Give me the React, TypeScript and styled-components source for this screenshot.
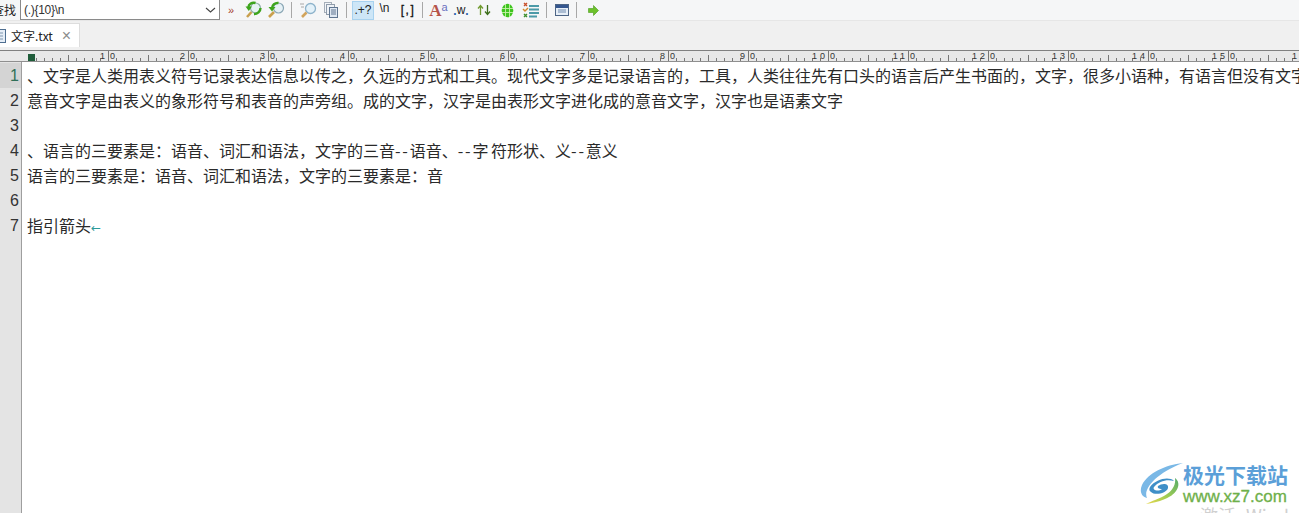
import React, { FC } from "react";
import styled, { createGlobalStyle } from "styled-components";

const lines = [
  "、文字是人类用表义符号记录表达信息以传之，久远的方式和工具。现代文字多是记录语言的，工具，人类往往先有口头的语言后产生书面的，文字，很多小语种，有语言但没有文字",
  "意音文字是由表义的象形符号和表音的声旁组。成的文字，汉字是由表形文字进化成的意音文字，汉字也是语素文字",
  "",
  "、语言的三要素是：语音、词汇和语法，文字的三音--语音、--字 符形状、义--意义",
  "语言的三要素是：语音、词汇和语法，文字的三要素是：音",
  "",
  "指引箭头",
];

const rulerMarks = Array.from({ length: 17 }, (_, i) => i);

const FindNextIcon: FC = () => (
  <svg width="18" height="18" viewBox="0 0 18 18">
    <circle cx="10.500" cy="7" r="5" fill="#e6f3f4" stroke="#8fb0a8" strokeWidth="1.200" />
    <path d="M6.500 11L2 16" stroke="#c9a04e" strokeWidth="2.600" />
    <path d="M3.500 6C3.500 3 7 1 10.500 2" stroke="#3da51d" strokeWidth="2.400" fill="none" />
    <path d="M0.500 5.500h6.500l-3.200 4.500z" fill="#3da51d" />
    <path d="M15.500 7c0 3.500-3 6-6.500 6" stroke="#3da51d" strokeWidth="2.400" fill="none" />
  </svg>
);

const FindPrevIcon: FC = () => (
  <svg width="18" height="18" viewBox="0 0 18 18">
    <circle cx="11.500" cy="7" r="5" fill="#e6f1f6" stroke="#8aa7b5" strokeWidth="1.200" />
    <path d="M7 11l-5 5" stroke="#c9a04e" strokeWidth="2.600" />
    <path d="M5 7c0-3 3-5.500 6.500-5" stroke="#3da51d" strokeWidth="2.400" fill="none" />
    <path d="M1.500 6h7l-3.500 4.500z" fill="#3da51d" />
  </svg>
);

const MagnifierIcon: FC = () => (
  <svg width="17" height="17" viewBox="0 0 17 17">
    <circle cx="10.500" cy="6.500" r="5" fill="#e3f1f9" stroke="#8db3cb" strokeWidth="1.300" />
    <path d="M6.500 10.500L2 15" stroke="#d2a45c" strokeWidth="2.600" />
    <path d="M0 2h4M1 5h3" stroke="#a8a8a8" />
  </svg>
);

const PagesIcon: FC = () => (
  <svg width="14" height="16" viewBox="0 0 14 16">
    <rect x="0.500" y="0.500" width="7" height="10" fill="#f2f5f9" stroke="#a5aeb9" />
    <rect x="2.500" y="2.500" width="8" height="10" fill="#eef2f7" stroke="#8f9cab" />
    <rect x="5.500" y="5.500" width="8" height="10" fill="#dfe8f3" stroke="#5f7590" />
    <path d="M7 8h5M7 10h5M7 12h5" stroke="#5f7590" />
  </svg>
);

const SwapIcon: FC = () => (
  <svg width="14" height="12" viewBox="0 0 14 12">
    <path d="M3.500 11V2M1 4.500L3.500 1.500 6 4.500" stroke="#6f9a2e" strokeWidth="1.300" fill="none" />
    <path d="M10.500 1v9M8 7.500l2.500 3 2.500-3" stroke="#3d6e1c" strokeWidth="1.300" fill="none" />
  </svg>
);

const GridIcon: FC = () => (
  <svg width="13" height="15" viewBox="0 0 13 15">
    <ellipse cx="6.500" cy="7.500" rx="5.800" ry="6.800" fill="#3fc41f" />
    <path d="M4.500 1v13M8.500 1v13M1 5.500h11M1 9.500h11" stroke="#c5f2a8" strokeWidth="0.900" />
  </svg>
);

const ListIcon: FC = () => (
  <svg width="17" height="17" viewBox="0 0 17 17">
    <path d="M7 4h10M7 7.500h10M7 11h10M7 14.500h8" stroke="#4b9aa8" strokeWidth="2" />
    <path d="M2 1l3 3M5 1L2 4" stroke="#c8502c" strokeWidth="1.400" />
    <path d="M1 7l2 2 3-3" stroke="#d08a2c" strokeWidth="1.400" fill="none" />
    <path d="M2 12l3 3M5 12l-3 3" stroke="#3e8f2e" strokeWidth="1.400" />
  </svg>
);

const PanelIcon: FC = () => (
  <svg width="14" height="12" viewBox="0 0 14 12">
    <rect x="0.500" y="0.500" width="13" height="11" fill="#e6eef7" stroke="#4c6485" />
    <rect x="1" y="1" width="12" height="3" fill="#34568f" />
    <path d="M3 6h8M3 8h8" stroke="#6f8aae" />
  </svg>
);

const GoIcon: FC = () => (
  <svg width="11" height="11" viewBox="0 0 11 11">
    <path d="M0.500 3.500h5V0.500L10.500 5.500l-5 5v-3h-5z" fill="#6cc12a" stroke="#4a9a1c" strokeWidth="0.600" />
  </svg>
);

const FileIcon: FC = () => (
  <svg width="12" height="16" viewBox="0 0 12 16">
    <rect x="0.500" y="1.500" width="11" height="13" fill="#e6eef7" stroke="#4f6f91" />
    <path d="M3 5h6M3 8h6M3 11h6" stroke="#7e96ae" />
  </svg>
);

const SwirlLogo: FC = () => (
  <svg width="43" height="41" viewBox="0 0 43 41">
    <defs>
      <linearGradient id="swirlTail" x1="0" y1="1" x2="1" y2="0">
        <stop offset="0" stopColor="#e8d84e" />
        <stop offset="0.500" stopColor="#9ccb54" />
        <stop offset="1" stopColor="#55ab6a" />
      </linearGradient>
    </defs>
    <path d="M43 0C25 2 8 10 2 22c-3 7 0 12 5 13C3 27 14 11 43 0z" fill="#7ab8e6" />
    <path d="M10 24c6-8 19-11 24-6-7-2-15 0-20 6-2 3 4 5 8 2-3 0-5-1-4-3 4-3 11-3 10 2-1 5-13 8-17 4-2-1-2-3-1-5z" fill="#3f8fc8" />
    <path d="M35 15c7 5 3 16-10 21-7 3-13 4-19 5 5-3 14-5 21-10 6-4 9-10 8-16z" fill="url(#swirlTail)" />
  </svg>
);

export default function App() {
  return (
    <>
      <GlobalStyle />
      <Window>
        <Toolbar>
          <FindLabel>查找</FindLabel>
          <FindCombo>
            <FindValue>(.){"{"}10{"}"}\n</FindValue>
            <svg width="11" height="6" viewBox="0 0 11 6">
              <path d="M1 1l4.500 4L10 1" stroke="#444" strokeWidth="1.100" fill="none" />
            </svg>
          </FindCombo>
          <MoreChevrons>»</MoreChevrons>
          <ToolButton $width={23}><FindNextIcon /></ToolButton>
          <ToolButton $width={21}><FindPrevIcon /></ToolButton>
          <Separator />
          <ToolButton $width={23}><MagnifierIcon /></ToolButton>
          <ToolButton $width={21}><PagesIcon /></ToolButton>
          <Separator />
          <ToolButton $width={22} $active><RegexText>.+?</RegexText></ToolButton>
          <ToolButton $width={21}><RegexText $raised>\n</RegexText></ToolButton>
          <ToolButton $width={22}><RegexBracket>[,]</RegexBracket></ToolButton>
          <Separator />
          <ToolButton $width={21}>
            <FontCaseBig>A</FontCaseBig>
            <FontCaseSmall>a</FontCaseSmall>
          </ToolButton>
          <ToolButton $width={24}>
            <WordDot>.</WordDot>
            <WordLetter>w</WordLetter>
            <WordDot>.</WordDot>
          </ToolButton>
          <ToolButton $width={22}><SwapIcon /></ToolButton>
          <ToolButton $width={25}><GridIcon /></ToolButton>
          <ToolButton $width={21}><ListIcon /></ToolButton>
          <Separator />
          <ToolButton $width={19}><PanelIcon /></ToolButton>
          <Separator />
          <ToolButton $width={22}><GoIcon /></ToolButton>
        </Toolbar>
        <TabBar>
          <Tab>
            <FileIcon />
            <TabTitle>文字.txt</TabTitle>
            <TabClose>×</TabClose>
          </Tab>
        </TabBar>
        <Ruler>
          <RulerMarker />
          <RulerTrack>
            {rulerMarks.map(i => (
              <RulerCell key={i}>
                {i > 0 && (
                  <>
                    <RulerTens>{i}</RulerTens>
                    <RulerBar />
                    <RulerUnit>0</RulerUnit>
                  </>
                )}
              </RulerCell>
            ))}
          </RulerTrack>
        </Ruler>
        <Editor>
          <Gutter>
            {lines.map((_, i) => (
              <GutterNumber key={i} $current={i === 0}>{i + 1}</GutterNumber>
            ))}
          </Gutter>
          <TextArea>
            {lines.map((line, i) => (
              <TextLine key={i}>
                {line.split(/(-+)/).map((part, j) =>
                  part.startsWith("-") ? <Dash key={j}>{part}</Dash> : part
                )}
                {i === 6 && <ReturnArrow>←</ReturnArrow>}
              </TextLine>
            ))}
          </TextArea>
        </Editor>
        <Watermark>
          <SwirlLogo />
          <WatermarkText>
            <WatermarkTitle>极光下载站</WatermarkTitle>
            <WatermarkUrl>www.xz7.com</WatermarkUrl>
          </WatermarkText>
        </Watermark>
        <ActivationHint>激活 Windows</ActivationHint>
      </Window>
    </>
  );
}

const GlobalStyle = createGlobalStyle`
  html, body {
    margin: 0;
    padding: 0;
    background: #ffffff;
    overflow: hidden;
  }
`;

const Window = styled.div`
  position: relative;
  width: 1299px;
  height: 513px;
  overflow: hidden;
  background: #ffffff;
  font-family: "Noto Sans CJK SC", "Liberation Sans", sans-serif;
  display: flex;
  flex-direction: column;
`;

const Toolbar = styled.div`
  height: 21px;
  flex: none;
  box-sizing: border-box;
  display: flex;
  align-items: center;
  margin-left: -8px;
  background: #f5f6f7;
  border-bottom: 1px solid #e6e6e6;
`;

const FindLabel = styled.span`
  font-size: 12px;
  line-height: 20px;
  width: 28px;
  color: #222222;
  flex: none;
`;

const FindCombo = styled.div`
  width: 200px;
  height: 20px;
  flex: none;
  box-sizing: border-box;
  background: #ffffff;
  border: 1px solid #8a8a8a;
  border-top: none;
  display: flex;
  align-items: center;
  justify-content: space-between;
  padding: 0 3px 0 3px;
`;

const FindValue = styled.span`
  font-family: "Liberation Sans", sans-serif;
  font-size: 12px;
  letter-spacing: -0.3px;
  color: #333333;
`;

const MoreChevrons = styled.span`
  width: 22px;
  flex: none;
  text-align: center;
  font-size: 11px;
  color: #a5402c;
  font-family: "Liberation Sans", sans-serif;
`;

const ToolButton = styled.div<{ $width: number; $active?: boolean }>`
  width: ${p => p.$width}px;
  height: 19px;
  flex: none;
  box-sizing: border-box;
  display: flex;
  align-items: center;
  justify-content: center;
  background: ${p => (p.$active ? "#cde6f7" : "transparent")};
  border: 1px solid ${p => (p.$active ? "#a8d2ef" : "transparent")};
`;

const RegexText = styled.span<{ $raised?: boolean }>`
  font-family: "Liberation Sans", sans-serif;
  font-size: 12px;
  line-height: 14px;
  color: #222222;
  margin-top: ${p => (p.$raised ? "-4px" : "0")};
`;

const RegexBracket = styled.span`
  font-family: "Liberation Sans", sans-serif;
  font-size: 12px;
  letter-spacing: 1.5px;
  line-height: 14px;
  color: #111111;
  -webkit-text-stroke: 0.3px #111111;
  margin-left: 4px;
`;

const FontCaseBig = styled.span`
  font-family: "Liberation Serif", serif;
  font-size: 17px;
  font-weight: 700;
  line-height: 16px;
  color: #b5544a;
  margin-top: 2px;
`;

const FontCaseSmall = styled.span`
  font-family: "Liberation Sans", sans-serif;
  font-size: 11px;
  line-height: 10px;
  color: #6a70c0;
  margin-top: -6px;
`;

const WordLetter = styled.span`
  font-family: "Liberation Sans", sans-serif;
  font-size: 12px;
  line-height: 12px;
  color: #222222;
`;

const WordDot = styled.span`
  font-family: "Liberation Sans", sans-serif;
  font-size: 12px;
  font-weight: 700;
  line-height: 12px;
  color: #2a5fa8;
  margin-top: 2px;
`;

const Separator = styled.div`
  width: 1px;
  height: 16px;
  flex: none;
  margin: 0 5px;
  background: #a8a8a8;
`;

const TabBar = styled.div`
  height: 29px;
  flex: none;
  box-sizing: border-box;
  display: flex;
  align-items: flex-end;
  padding-bottom: 3px;
  background: #f0f0f0;
`;

const Tab = styled.div`
  width: 88px;
  height: 24px;
  margin-left: -8px;
  box-sizing: border-box;
  display: flex;
  align-items: center;
  gap: 3px;
  padding-left: 1px;
  background: #ffffff;
  border: 1px solid #dddddd;
  border-bottom: none;
`;

const TabTitle = styled.span`
  font-size: 12px;
  color: #222222;
  margin-left: 2px;
`;

const TabClose = styled.span`
  font-family: "Liberation Sans", sans-serif;
  font-size: 16px;
  line-height: 16px;
  color: #8c8c8c;
  margin-left: 6px;
`;

const Ruler = styled.div`
  position: relative;
  height: 12px;
  flex: none;
  box-sizing: border-box;
  background: #e8e8e8;
  border-top: 1px solid #808080;
  border-bottom: 1px solid #8f8f8f;
  overflow: hidden;
`;

const RulerMarker = styled.div`
  position: absolute;
  left: 28px;
  top: 3px;
  width: 7px;
  height: 7px;
  background: #1f5c3a;
`;

const RulerTrack = styled.div`
  display: flex;
  height: 100%;
  padding-left: 28px;
  background-image:
    repeating-linear-gradient(to right, #777777 0, #777777 1px, transparent 1px, transparent 8px),
    repeating-linear-gradient(to right, transparent 0, transparent 40px, #777777 40px, #777777 41px, transparent 41px, transparent 80px);
  background-position: 28px bottom, 28px bottom;
  background-size: 100% 3px, 100% 6px;
  background-repeat: no-repeat;
`;

const RulerCell = styled.div`
  position: relative;
  width: 80px;
  flex: none;
  font-family: "Liberation Sans", sans-serif;
  font-size: 9px;
  line-height: 10px;
  color: #333333;
`;

const RulerTens = styled.span`
  position: absolute;
  right: 100%;
  top: 0;
  letter-spacing: 3px;
`;

const RulerBar = styled.i`
  position: absolute;
  left: 0;
  top: 0;
  width: 1px;
  height: 10px;
  background: #777777;
`;

const RulerUnit = styled.span`
  position: absolute;
  left: 2px;
  top: 0;
`;

const Editor = styled.div`
  flex: 1;
  display: flex;
  min-height: 0;
`;

const Gutter = styled.div`
  width: 21px;
  flex: none;
  background: #e4e4e4;
  border-right: 1px solid #9e9e9e;
  padding-top: 1px;
`;

const GutterNumber = styled.div<{ $current: boolean }>`
  height: 25px;
  line-height: 26px;
  text-align: right;
  padding-right: 2px;
  font-family: "Liberation Sans", sans-serif;
  font-size: 16px;
  color: ${p => (p.$current ? "#2f6f57" : "#333333")};
  background: ${p => (p.$current ? "#d4d4d4" : "transparent")};
`;

const TextArea = styled.div`
  flex: 1;
  min-width: 0;
  padding: 1px 0 0 5px;
  overflow: hidden;
`;

const TextLine = styled.div`
  height: 25px;
  line-height: 25px;
  white-space: nowrap;
  font-size: 16px;
  word-spacing: -1px;
  color: #2a2a2a;
`;

const Dash = styled.span`
  letter-spacing: 1.8px;
`;

const ReturnArrow = styled.span`
  font-family: "DejaVu Sans", sans-serif;
  font-size: 12px;
  color: #2b9a9a;
`;

const Watermark = styled.div`
  position: absolute;
  left: 1140px;
  top: 463px;
  display: flex;
  align-items: flex-start;
`;

const WatermarkText = styled.div`
  display: flex;
  flex-direction: column;
  align-items: flex-start;
  padding-top: 1px;
`;

const WatermarkTitle = styled.div`
  font-size: 21px;
  line-height: 21px;
  font-weight: 700;
  color: #5b9fd8;
  white-space: nowrap;
`;

const WatermarkUrl = styled.div`
  font-family: "Liberation Sans", sans-serif;
  font-size: 17px;
  line-height: 18px;
  margin-top: 3px;
  color: #6fb04a;
  -webkit-text-stroke: 0.3px #6fb04a;
`;

const ActivationHint = styled.div`
  position: absolute;
  left: 1200px;
  top: 506px;
  font-size: 18px;
  line-height: 18px;
  word-spacing: 6px;
  color: #d0d0d0;
  white-space: nowrap;
`;
